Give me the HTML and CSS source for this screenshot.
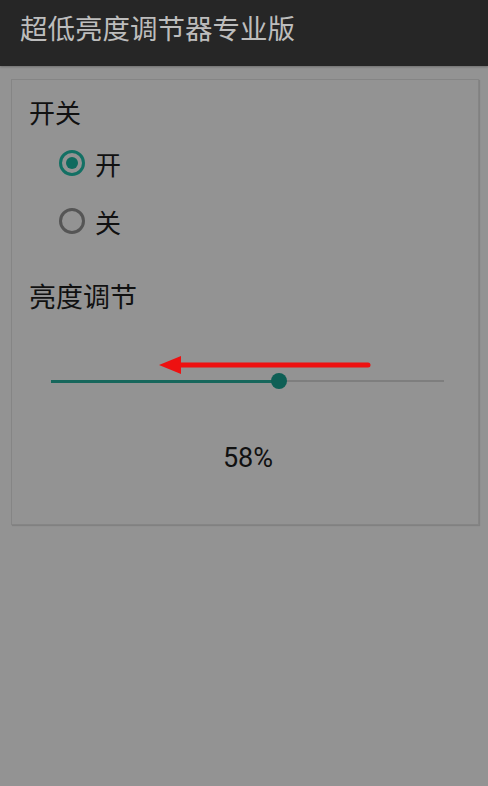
FILE: index.html
```html
<!DOCTYPE html>
<html lang="zh-CN">
<head>
    <meta charset="UTF-8">
    <meta name="viewport" content="width=device-width, initial-scale=1.0">
    <title>超低亮度调节器专业版</title>
    <link rel="stylesheet" href="styles.css">
</head>
<body>
    <div class="appbar">超低亮度调节器专业版</div>

    <div class="card">
        <div class="label">开关</div>
        <div class="radio-group">
            <div class="radio-row">
                <span class="radio checked"></span>
                <span class="radio-text">开</span>
            </div>
            <div class="radio-row">
                <span class="radio"></span>
                <span class="radio-text">关</span>
            </div>
        </div>

        <div class="label brightness">亮度调节</div>
        <div class="slider">
            <div class="track">
                <div class="fill" style="width: 58%"></div>
                <div class="thumb" style="left: 58%"></div>
            </div>
            <!-- 提示箭头 -->
            <svg class="arrow" width="432" height="60" viewBox="0 0 432 60">
                <line x1="148" y1="14" x2="339" y2="14" stroke="#ee1111" stroke-width="5" stroke-linecap="round"/>
                <polygon points="130,14 152,5 152,23" fill="#ee1111"/>
            </svg>
        </div>
        <div class="value">58%</div>
    </div>
</body>
</html>
```

FILE: styles.css
```css
body {
    margin: 0;
    padding: 0;
    background-color: #939393;
    font-family: "Noto Sans CJK SC", "Noto Sans", sans-serif;
    color: #111;
    overflow: hidden;
    height: 786px;
}
.appbar {
    height: 66px;
    line-height: 54px;
    padding-left: 20px;
    background-color: #262626;
    color: #bdbdbd;
    font-size: 27.5px;
    box-shadow: 0 1px 2px rgba(0, 0, 0, 0.25);
}
.card {
    margin: 13px 9px 0 11px;
    height: 446px;
    box-sizing: border-box;
    border: 1px solid #858585;
    box-shadow: 1px 1px 1px rgba(0, 0, 0, 0.12);
    padding: 16px 17px 0 17px;
}
.label {
    font-size: 26px;
    line-height: 32px;
}
.brightness {
    font-size: 27px;
    margin-top: 30px;
}
.radio-group {
    margin-top: 6px;
}
.radio-row {
    display: flex;
    align-items: center;
    height: 58px;
    padding-left: 30px;
}
.radio {
    width: 26px;
    height: 26px;
    box-sizing: border-box;
    border: 3px solid #555;
    border-radius: 50%;
    display: flex;
    justify-content: center;
    align-items: center;
}
.radio.checked {
    border-color: #137064;
}
.radio.checked::after {
    content: "";
    width: 12px;
    height: 12px;
    border-radius: 50%;
    background-color: #0f6a5e;
}
.radio-text {
    margin-left: 10px;
    font-size: 26px;
}
.slider {
    position: relative;
    height: 60px;
    margin-top: 39px;
    padding: 0 17px 0 22px;
    display: flex;
    align-items: center;
}
.track {
    position: relative;
    flex: 1;
    height: 2px;
    background-color: #7e7e7e;
}
.fill {
    position: absolute;
    left: 0;
    top: -0.5px;
    height: 3px;
    background-color: #17675c;
}
.thumb {
    position: absolute;
    top: -7px;
    width: 16px;
    height: 16px;
    margin-left: -8px;
    border-radius: 50%;
    background-color: #0e5f55;
}
.arrow {
    position: absolute;
    left: 0;
    top: 0;
}
.value {
    margin-top: 31px;
    padding-left: 6px;
    text-align: center;
    font-family: Roboto, "Noto Sans", sans-serif;
    font-size: 27px;
    line-height: 32px;
}
```
